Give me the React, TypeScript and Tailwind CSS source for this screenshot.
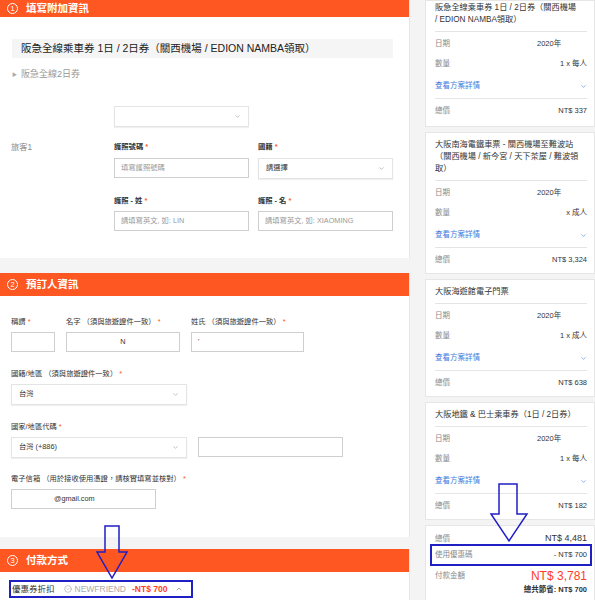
import type { ReactNode } from 'react';
import { ChevronDown, ChevronUp, CircleCheck } from 'lucide-react';

function SectionHeader({ num, title, className = '' }: { num: string; title: string; className?: string }) {
  return (
    <div className={`flex items-center bg-[#ff5722] pl-[7px] text-white ${className}`}>
      <span className="flex h-[11px] w-[11px] items-center justify-center rounded-full border border-white text-[7.5px] leading-none">
        {num}
      </span>
      <span className="ml-[8px] text-[10.5px] font-bold">{title}</span>
    </div>
  );
}

function Req({ children, bold }: { children: ReactNode; bold?: boolean }) {
  return (
    <div className={`h-[10px] whitespace-nowrap text-[7.3px] leading-[10px] text-[#333] ${bold ? 'font-bold' : ''}`}>
      {children} <span className="text-[#ff5722]">*</span>
    </div>
  );
}

function Input({ className = '', children }: { className?: string; children?: ReactNode }) {
  return (
    <div className={`mt-[5px] flex h-[20px] items-center border border-[#cfcfcf] bg-white px-[6px] text-[7.3px] ${className}`}>
      {children}
    </div>
  );
}

function Select({ className = '', children }: { className?: string; children?: ReactNode }) {
  return (
    <div
      className={`mt-[5px] flex h-[21px] items-center justify-between border border-[#e4e4e4] bg-white px-[7px] text-[7.3px] text-[#333] shadow-[0_1px_1px_rgba(0,0,0,0.06)] ${className}`}
    >
      <span>{children}</span>
      <ChevronDown className="h-[7px] w-[7px] text-[#999]" strokeWidth={2} />
    </div>
  );
}

function Row({ label, children, h = 'h-[20px]' }: { label: string; children: ReactNode; h?: string }) {
  return (
    <div className={`flex items-center justify-between ${h} text-[7.5px]`}>
      <span className="text-[#888]">{label}</span>
      {children}
    </div>
  );
}

function Card({ lines, qty, total, className = '' }: { lines: string[]; qty: string; total: string; className?: string }) {
  return (
    <div className={`border border-[#e6e6e6] bg-white pl-[9px] pr-[7px] ${className}`}>
      <div className="whitespace-nowrap text-[8.2px] leading-[12px] text-[#333]">
        {lines.map((l) => (
          <div key={l}>{l}</div>
        ))}
      </div>
      <div className="mt-[5px] h-px bg-[#e5e5e5]" />
      <div className="mt-[2px]">
        <Row label="日期">
          <span className="w-[50px] text-[#333]">2020年</span>
        </Row>
        <Row label="數量">
          <span className="text-[#333]">{qty}</span>
        </Row>
        <div className="flex h-[24px] items-center justify-between text-[7.5px] text-[#3b7ddd]">
          <span>查看方案詳情</span>
          <ChevronDown className="h-[7px] w-[7px]" strokeWidth={2} />
        </div>
      </div>
      <div className="h-px bg-[#e5e5e5]" />
      <Row label="總價" h="h-[24px]">
        <span className="text-[#333]">{total}</span>
      </Row>
    </div>
  );
}

export default function App() {
  return (
    <div className="relative flex h-[600px] w-[595px] overflow-hidden bg-[#f4f4f4] font-['Liberation_Sans','Noto_Sans_CJK_TC',sans-serif]">
      <div className="w-[410px] shrink-0">
        <section className="h-[258px] border-r border-[#e6e6e6] bg-white">
          <SectionHeader num="1" title="填寫附加資訊" className="h-[17px]" />
          <div className="pl-[11px] pt-[22px]">
            <div className="ml-px flex h-[19px] w-[381px] items-center bg-[#f5f5f5] px-[9px] text-[10.5px] text-[#222]">
              阪急全線乘車券 1日 / 2日券（關西機場 / EDION NAMBA領取）
            </div>
            <div className="mt-[11px] flex h-[12px] items-center pl-px text-[9px] text-[#999]">
              <span className="mr-[4px] text-[5px] text-[#aaa]">▶</span>
              阪急全線2日券
            </div>
            <div className="ml-[103px] mt-[25px] w-[135px]">
              <Select className="h-[20px]" />
            </div>
            <div className="mt-[15px] flex gap-[9px]">
              <div className="w-[94px] text-[8.2px] leading-[12px] text-[#888]">旅客1</div>
              <div className="w-[135px]">
                <Req bold>護照號碼</Req>
                <Input className="mt-[6px] text-[#999]">填寫護照號碼</Input>
              </div>
              <div className="w-[135px]">
                <Req bold>國籍</Req>
                <Select className="mt-[6px] h-[20px]">請選擇</Select>
              </div>
            </div>
            <div className="ml-[103px] mt-[17px] flex gap-[9px]">
              <div className="w-[135px]">
                <Req bold>護照 - 姓</Req>
                <Input className="text-[#999]">請填寫英文, 如: LIN</Input>
              </div>
              <div className="w-[135px]">
                <Req bold>護照 - 名</Req>
                <Input className="text-[#999]">請填寫英文, 如: XIAOMING</Input>
              </div>
            </div>
          </div>
        </section>

        <section className="mt-[15px] h-[264px] border-r border-[#e6e6e6] bg-white">
          <SectionHeader num="2" title="預訂人資訊" className="h-[23px]" />
          <div className="pl-[11px] pt-[21px]">
            <div className="flex gap-[11px]">
              <div className="w-[44px]">
                <Req>稱謂</Req>
                <Input />
              </div>
              <div className="w-[114px]">
                <Req>名字 （須與旅遊證件一致）</Req>
                <Input className="justify-center text-[#333]">N</Input>
              </div>
              <div className="w-[113px]">
                <Req>姓氏 （須與旅遊證件一致）</Req>
                <Input className="text-[#333]">'</Input>
              </div>
            </div>
            <div className="mt-[17px] w-[176px]">
              <Req>國籍/地區 （須與旅遊證件一致）</Req>
              <Select>台灣</Select>
            </div>
            <div className="mt-[17px]">
              <Req>國家/地區代碼</Req>
              <div className="flex gap-[11px]">
                <Select className="w-[176px]">台灣 (+886)</Select>
                <Input className="w-[145px]" />
              </div>
            </div>
            <div className="mt-[16px]">
              <Req>電子信箱 （用於接收使用憑證，請核實填寫並核對）</Req>
              <Input className="w-[145px] pl-[42px] text-[#333]">@gmail.com</Input>
            </div>
          </div>
        </section>

        <section className="mt-[12px] h-[60px] border-r border-[#e6e6e6] bg-white">
          <SectionHeader num="3" title="付款方式" className="h-[23px]" />
          <div className="pl-[9px] pt-[8px]">
            <div className="flex h-[18px] w-[184px] items-center border-2 border-[#1f1fc4] pl-px text-[8.5px]">
              <span className="text-[#333]">優惠券折扣</span>
              <CircleCheck className="ml-[9px] h-[8px] w-[8px] text-[#aaa]" strokeWidth={2} />
              <span className="ml-[3px] text-[#aaa]">NEWFRIEND</span>
              <span className="ml-[6px] font-bold text-[#ff3d1f]">-NT$ 700</span>
              <ChevronUp className="ml-[8px] h-[8px] w-[8px] text-[#777]" strokeWidth={2} />
            </div>
          </div>
        </section>
      </div>

      <div className="ml-[15px] flex w-[170px] shrink-0 flex-col gap-[5px]">
        <Card
          className="pb-[3px] pt-[1px]"
          lines={['阪急全線乘車券 1日 / 2日券（關西機場', '/ EDION NAMBA領取）']}
          qty="1 x 每人"
          total="NT$ 337"
        />
        <Card
          className="pb-px pt-[6px]"
          lines={['大阪南海電鐵車票 - 關西機場至難波站', '（關西機場 / 新今宮 / 天下茶屋 / 難波領', '取）']}
          qty="x 成人"
          total="NT$ 3,324"
        />
        <Card className="pb-px pt-[6px]" lines={['大阪海遊館電子門票']} qty="1 x 成人" total="NT$ 638" />
        <Card className="pb-px pt-[6px]" lines={['大阪地鐵 & 巴士乘車券（1日 / 2日券）']} qty="1 x 每人" total="NT$ 182" />
        <div className="border border-[#e6e6e6] bg-white pb-[10px] pl-[9px] pr-[7px] pt-[8px]">
          <div className="flex h-[10px] items-center justify-between">
            <span className="text-[7.5px] text-[#888]">總價</span>
            <span className="text-[9px] text-[#333]">NT$ 4,481</span>
          </div>
          <div className="-mx-[5px] flex h-[22px] items-center justify-between border-2 border-[#1f1fc4] px-[3px] text-[7.5px]">
            <span className="text-[#888]">使用優惠碼</span>
            <span className="text-[#333]">- NT$ 700</span>
          </div>
          <div className="flex h-[19px] items-center justify-between">
            <span className="text-[7.5px] text-[#888]">付款金額</span>
            <span className="text-[12px] text-[#ff3d1f]">NT$ 3,781</span>
          </div>
          <div className="flex h-[10px] items-center justify-end text-[7.5px] font-bold text-[#333]">總共節省: NT$ 700</div>
        </div>
      </div>

      <svg className="pointer-events-none absolute inset-0" width="595" height="600" viewBox="0 0 595 600">
        <polygon
          points="105,526 119,526 119,552 127,552 112,578 97,552 105,552"
          fill="none"
          stroke="#1f1fc4"
          strokeWidth="1.5"
        />
        <polygon
          points="499,484 517,484 517,514 527,514 509,541 491,514 499,514"
          fill="none"
          stroke="#1f1fc4"
          strokeWidth="1.5"
        />
      </svg>
    </div>
  );
}
